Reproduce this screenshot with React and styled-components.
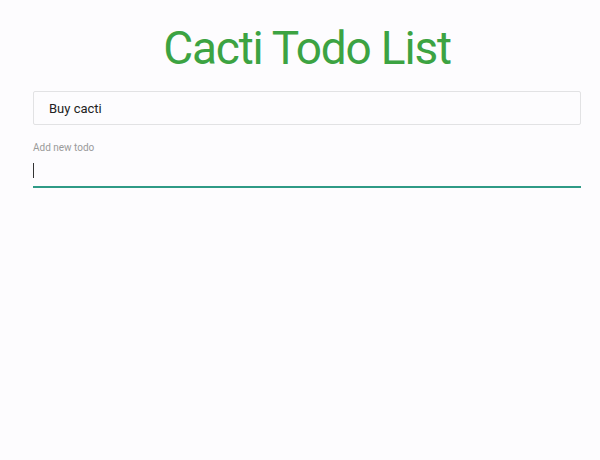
import React from 'react'
import styled, { createGlobalStyle } from 'styled-components'

const GlobalStyle = createGlobalStyle`
  body {
    margin: 0;
    background: #fdfcfe;
    font-family: Roboto, "Liberation Sans", Arial, sans-serif;
  }
`

const Page = styled.div`
  padding: 0 19px 0 33px;
`

const Title = styled.h1`
  margin: 0;
  padding-top: 25px;
  height: 91px;
  box-sizing: border-box;
  text-align: center;
  font-size: 46px;
  font-weight: 400;
  line-height: 46px;
  letter-spacing: -1.2px;
  color: #3ca342;
`

const TodoList = styled.ul`
  list-style: none;
  margin: 0;
  padding: 0;
`

const TodoItem = styled.li`
  height: 34px;
  box-sizing: border-box;
  border: 1px solid #e2e2e4;
  border-radius: 2px;
  background: #fdfcfe;
  display: flex;
  align-items: center;
  padding-left: 15px;
  font-size: 13px;
  color: #222;
`

const Field = styled.label`
  display: flex;
  flex-direction: column;
  margin-top: 17px;
`

const FieldLabel = styled.span`
  font-size: 10px;
  color: #9a9a9a;
  line-height: 12px;
`

const InputWrap = styled.div`
  position: relative;
  margin-top: 6px;
`

const FieldInput = styled.input`
  display: block;
  width: 100%;
  box-sizing: border-box;
  height: 28px;
  border: none;
  border-bottom: 2px solid #2f9a86;
  background: transparent;
  padding: 0;
  font: inherit;
  font-size: 14px;
  outline: none;
  caret-color: #333;
`

const Caret = styled.span`
  position: absolute;
  left: 0;
  top: 3px;
  width: 1px;
  height: 15px;
  background: #333;
  pointer-events: none;
`

const App = () => {
  return (
    <>
      <GlobalStyle />
      <Page>
        <Title>Cacti Todo List</Title>
        <TodoList>
          <TodoItem>Buy cacti</TodoItem>
        </TodoList>
        <Field>
          <FieldLabel>Add new todo</FieldLabel>
          <InputWrap>
            <FieldInput />
            <Caret />
          </InputWrap>
        </Field>
      </Page>
    </>
  )
}

export default App
